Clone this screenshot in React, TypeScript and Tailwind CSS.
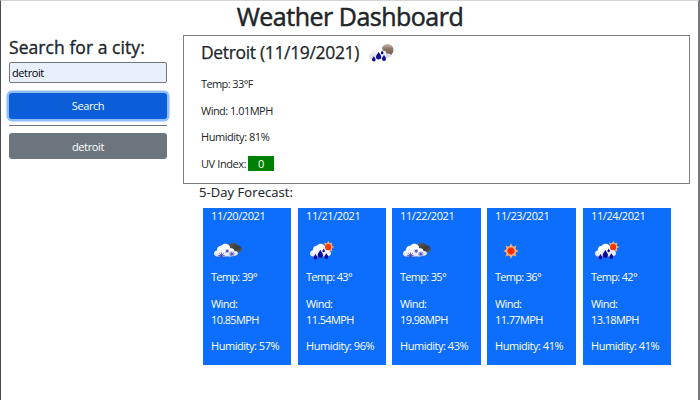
import React from "react";

type Sky = "snow" | "rain" | "sun" | "night";

function Cloud({ night = false }: { night?: boolean }) {
  return (
    <path
      d="M3.6 15.6C1.2 15.6 0 14.1 0 12.4c0-1.6 1.2-2.8 2.9-3C2.9 6.4 5 4.6 7.6 4.5c1-1.4 2.6-2 4.2-1.8 2.7.2 4.4 2.2 4.5 4.5 2.9-.4 4.5 1.4 4.5 3.7 0 2.8-1.6 4.7-4.2 4.7z"
      fill={night ? "url(#pale)" : "url(#white)"}
    />
  );
}

const Drop = ({ x, y, r = 1.7 }: { x: number; y: number; r?: number }) => (
  <path
    d={`M${x} ${y - r * 1.7}C${x + r * 0.5} ${y - r * 0.8} ${x + r} ${y - r * 0.4} ${x + r} ${y + r * 0.2}a${r} ${r} 0 0 1 ${-2 * r} 0C${x - r} ${y - r * 0.4} ${x - r * 0.5} ${y - r * 0.8} ${x} ${y - r * 1.7}z`}
    fill="#09099a"
  />
);

function Flake({ x, y, r }: { x: number; y: number; r: number }) {
  return (
    <path
      d={`M${x - r} ${y}h${2 * r}M${x} ${y - r}v${2 * r}M${x - r * 0.7} ${y - r * 0.7}l${r * 1.4} ${r * 1.4}M${x + r * 0.7} ${y - r * 0.7}l${-r * 1.4} ${r * 1.4}`}
      stroke="#4747bd"
      strokeWidth="0.85"
    />
  );
}

function Sun({ x, y, r }: { x: number; y: number; r: number }) {
  const rays = Array.from({ length: 16 }, (_, i) => {
    const a = (i * Math.PI) / 8;
    const d = i % 2 === 0 ? r * 1.8 : r * 1.1;
    return `${x + Math.sin(a) * d},${y - Math.cos(a) * d}`;
  }).join(" ");
  return (
    <g>
      <polygon points={rays} fill="#f6a866" />
      <circle cx={x} cy={y} r={r} fill="url(#core)" stroke="#fbd0a0" strokeWidth="0.8" />
    </g>
  );
}

function WeatherIcon({ sky }: { sky: Sky }) {
  return (
    <svg width="30" height="22" viewBox="0 0 30 22" fill="none" className="block">
      <defs>
        <linearGradient id="white" x1="0" y1="0" x2="0" y2="1">
          <stop offset="0.5" stopColor="#fff" />
          <stop offset="1" stopColor="#d9dcef" />
        </linearGradient>
        <linearGradient id="pale" x1="0" y1="0" x2="0" y2="1">
          <stop offset="0.3" stopColor="#fbfbfc" />
          <stop offset="1" stopColor="#d8d8df" />
        </linearGradient>
        <linearGradient id="dark" x1="0" y1="0" x2="1" y2="1">
          <stop offset="0" stopColor="#636363" />
          <stop offset="0.6" stopColor="#383838" />
          <stop offset="1" stopColor="#606060" />
        </linearGradient>
        <radialGradient id="core">
          <stop offset="0.5" stopColor="#ff2500" />
          <stop offset="1" stopColor="#fa6030" />
        </radialGradient>
        <linearGradient id="moon" x1="0" y1="0" x2="0" y2="1">
          <stop offset="0" stopColor="#c5b5aa" />
          <stop offset="0.4" stopColor="#8f7768" />
          <stop offset="1" stopColor="#6d5145" />
        </linearGradient>
      </defs>
      {sky === "sun" && <Sun x={14} y={10} r={4.3} />}
      {sky === "snow" && (
        <g transform="translate(1 0)">
          <path d="M13.5 5c1-2.2 3.3-3.4 5.8-3.2 2 .1 3.4 1 4 2.4 2.4-.2 4.4 1.7 4.6 3.8.1 2-1 3-3.3 3H16z" fill="url(#dark)" />
          <Cloud />
          <path d="M15 15.3c5 .2 8-.6 9-2.2.4-1.8-1-3.1-3-3z" fill="#e5e5f3" />
          <Flake x={7.4} y={14.6} r={3.2} />
          <Flake x={13.2} y={10} r={1.8} />
          <Flake x={17.8} y={13} r={2.5} />
        </g>
      )}
      {sky === "rain" && (
        <g transform="translate(2 0) scale(.94 1)">
          <Sun x={19.5} y={6} r={3.5} />
          <Cloud />
          <circle cx="19.2" cy="6.2" r="3.2" fill="#ff3600" />
          <path d="M15 10c3-1.5 7-1 7.3 1.9.3 2.2-1.7 3.4-5.3 3.4z" fill="#eeeef8" />
          <Drop x={5.8} y={16.3} r={1.9} />
          <Drop x={11} y={13.5} r={2.8} />
          <Drop x={14.5} y={9.8} r={1.3} />
          <Drop x={17.4} y={15.6} r={2} />
        </g>
      )}
      {sky === "night" && (
        <g transform="translate(2 2.5)">
          <circle cx="18.5" cy="6.6" r="6" fill="url(#moon)" />
          <g transform="scale(.85 1)">
            <Cloud night />
          </g>
          <path d="M14 14.5c4 .7 8-.6 8-2.4 0-1.6-1.8-2.4-4-1.8z" fill="#dedde2" />
          <Drop x={4.8} y={15.9} r={1.8} />
          <Drop x={9.6} y={12.8} r={2.6} />
          <Drop x={13.2} y={9.3} r={1.3} />
          <Drop x={15} y={15} r={2} />
        </g>
      )}
    </svg>
  );
}

const forecast: { date: string; sky: Sky; temp: number; wind: string; humidity: number }[] = [
  { date: "11/20/2021", sky: "snow", temp: 39, wind: "10.85", humidity: 57 },
  { date: "11/21/2021", sky: "rain", temp: 43, wind: "11.54", humidity: 96 },
  { date: "11/22/2021", sky: "snow", temp: 35, wind: "19.98", humidity: 43 },
  { date: "11/23/2021", sky: "sun", temp: 36, wind: "11.77", humidity: 41 },
  { date: "11/24/2021", sky: "rain", temp: 42, wind: "13.18", humidity: 41 },
];

export default function App() {
  return (
    <div className="h-[400px] w-[700px] overflow-hidden border-t border-r-2 border-l border-t-[#d5d5d8] border-r-[#77777b] border-l-[#4b4b55] bg-white font-['Open_Sans','Noto_Sans',sans-serif] text-[11px] leading-4 text-[#212529]">
      <h1 className="h-[34px] pl-px text-center text-[25px] leading-[31px] tracking-[-0.5px] [-webkit-text-stroke:0.5px_#212529]">Weather Dashboard</h1>
      <div className="flex">
        <aside className="w-[166px] shrink-0 pl-2">
          <h2 className="h-[27px] text-[17.5px] leading-6 whitespace-nowrap tracking-[0.06px] [-webkit-text-stroke:0.35px_#212529]">Search for a city:</h2>
          <input
            defaultValue="detroit"
            className="block h-[21px] w-full rounded-[2px] border border-[#767676] bg-[#e8f0fe] px-[2px] text-[11px] tracking-[-0.4px] text-black outline-none"
          />
          <button className="mt-[10px] block h-[26px] w-full rounded-[3px] bg-[#0b5ed7] text-[11px] tracking-[-0.4px] text-white ring-[2.5px] ring-[#8fbdfb]">Search</button>
          <hr className="mt-[6px] border-[#777]" />
          <button className="mt-[7px] block h-[26px] w-full rounded-[3px] bg-[#6c757d] pt-[2px] text-[11px] tracking-[-0.35px] text-white">detroit</button>
        </aside>
        <main className="ml-4 w-[507px] shrink-0">
          <section className="h-[149px] border border-[#7d7d7d] pl-[17px]">
            <div className="flex h-8 items-center">
              <h2 className="w-[166px] text-[17.5px] leading-6 whitespace-nowrap tracking-[-0.34px] [-webkit-text-stroke:0.25px_#212529]">Detroit (11/19/2021)</h2>
              <WeatherIcon sky="night" />
            </div>
            <div className="mt-[8px] flex flex-col gap-[10.5px]">
              <p className="tracking-[-0.6px]">Temp: 33°F</p>
              <p className="tracking-[-0.52px]">Wind: 1.01MPH</p>
              <p className="tracking-[-0.45px]">Humidity: 81%</p>
              <p className="flex tracking-[-0.4px]">
                <span className="w-[47px]">UV Index:</span>
                <span className="h-[15px] w-[26px] bg-[#008000] text-center leading-[15px] text-white">0</span>
              </p>
            </div>
          </section>
          <h3 className="h-6 pl-4 text-[13px] leading-[17px] tracking-[0.07px] [-webkit-text-stroke:0.1px_#212529]">5-Day Forecast:</h3>
          <div className="ml-5 grid grid-cols-[95px_94px_95px_96px_88px]">
            {forecast.map((day) => (
              <article key={day.date} className="h-[157px] w-[88px] bg-[#0d6efd] pl-2 text-white nth-[3]:w-[89px] nth-[4]:w-[89px]">
                <p className="tracking-[-0.4px]">{day.date}</p>
                <div className="mt-[17px] ml-[2px]">
                  <WeatherIcon sky={day.sky} />
                </div>
                <div className="mt-[6px] flex flex-col gap-[10.5px] whitespace-nowrap">
                  <p className="tracking-[-0.7px]">Temp: {day.temp}°</p>
                  <p className="tracking-[-0.6px]">
                    Wind:
                    <br />
                    {day.wind}MPH
                  </p>
                  <p className="tracking-[-0.47px]">Humidity: {day.humidity}%</p>
                </div>
              </article>
            ))}
          </div>
        </main>
      </div>
    </div>
  );
}
